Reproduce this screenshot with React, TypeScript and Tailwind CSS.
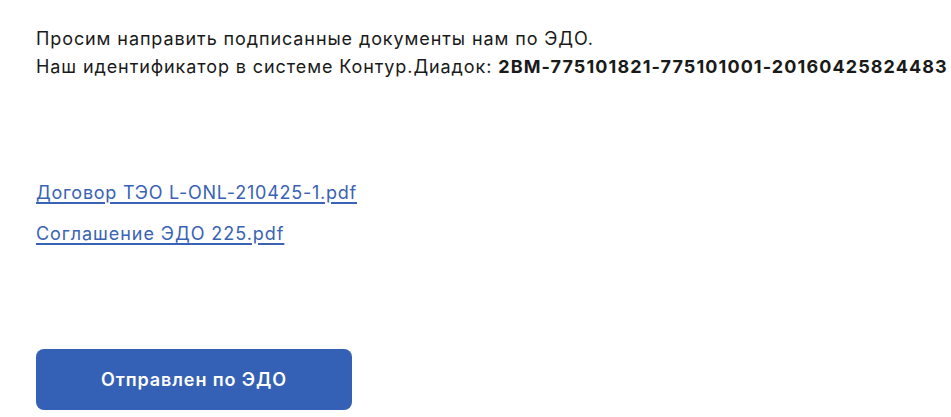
export default function App() {
  return (
    <div className="min-h-[417px] overflow-hidden bg-white pl-[36px] pt-[25px] text-[18px] leading-[28px] tracking-[0.9px] text-[#1a1a1a]" style={{ fontFamily: "Inter, 'Noto Sans', sans-serif" }}>
      <p className="whitespace-nowrap">Просим направить подписанные документы нам по ЭДО.</p>
      <p className="whitespace-nowrap">
        Наш идентификатор в системе Контур.Диадок: <b className="font-bold tracking-[1.1px]">2BM-775101821-775101001-20160425824483</b>
      </p>
      <div className="mt-[98px] flex flex-col gap-[13px]">
        <a href="#" className="w-fit tracking-[0.75px] text-[#3a62b5] underline decoration-[1.5px] underline-offset-[3px]">Договор ТЭО L-ONL-210425-1.pdf</a>
        <a href="#" className="w-fit tracking-[0.95px] text-[#3a62b5] underline decoration-[1.5px] underline-offset-[3px]">Соглашение ЭДО 225.pdf</a>
      </div>
      <button className="mt-[101px] flex h-[61px] w-[316px] items-center justify-center rounded-[8px] bg-[#3461b6] font-semibold text-white">
        Отправлен по ЭДО
      </button>
    </div>
  );
}
